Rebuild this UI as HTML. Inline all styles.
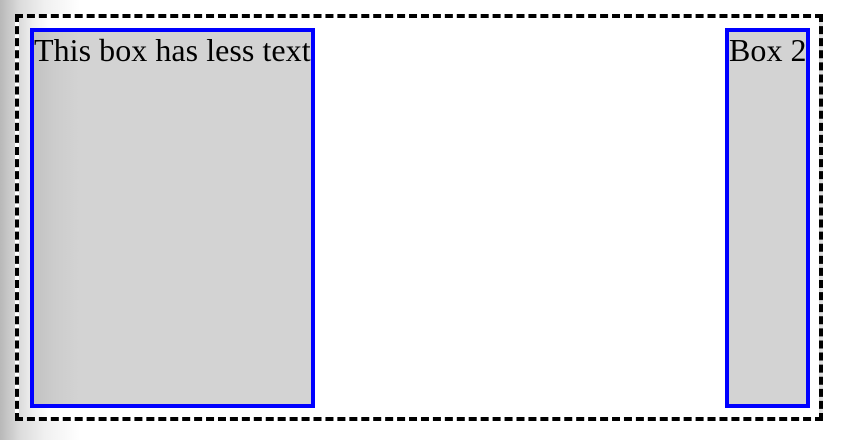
<!DOCTYPE html>
<html><head><style>
html,body{margin:0;padding:0;width:852px;height:440px;overflow:hidden;background:#fff;}
body{position:relative;background:linear-gradient(to right,#b8b8b8 0px,#dcdcdc 20px,#f0f0f0 45px,#fff 80px);}
.c{position:absolute;left:15px;top:14px;width:800px;height:399px;border:4px dashed #000;background:linear-gradient(to right,#dadada 0px,#f2f2f2 15px,#fff 30px);}
.b{position:absolute;top:28px;height:372px;border:4px solid #0000ff;background:#d3d3d3;font-family:"Liberation Serif",serif;font-size:32px;line-height:36px;color:#000;white-space:nowrap;letter-spacing:0.05px;}
.b1{left:30px;width:277px;background:linear-gradient(to right,#c2c2c2 0px,#cccccc 20px,#d3d3d3 45px);}
.b2{left:725px;width:77px;}
</style></head><body>
<div class="c"></div>
<div class="b b1">This box has less text</div>
<div class="b b2">Box 2</div>
</body></html>
